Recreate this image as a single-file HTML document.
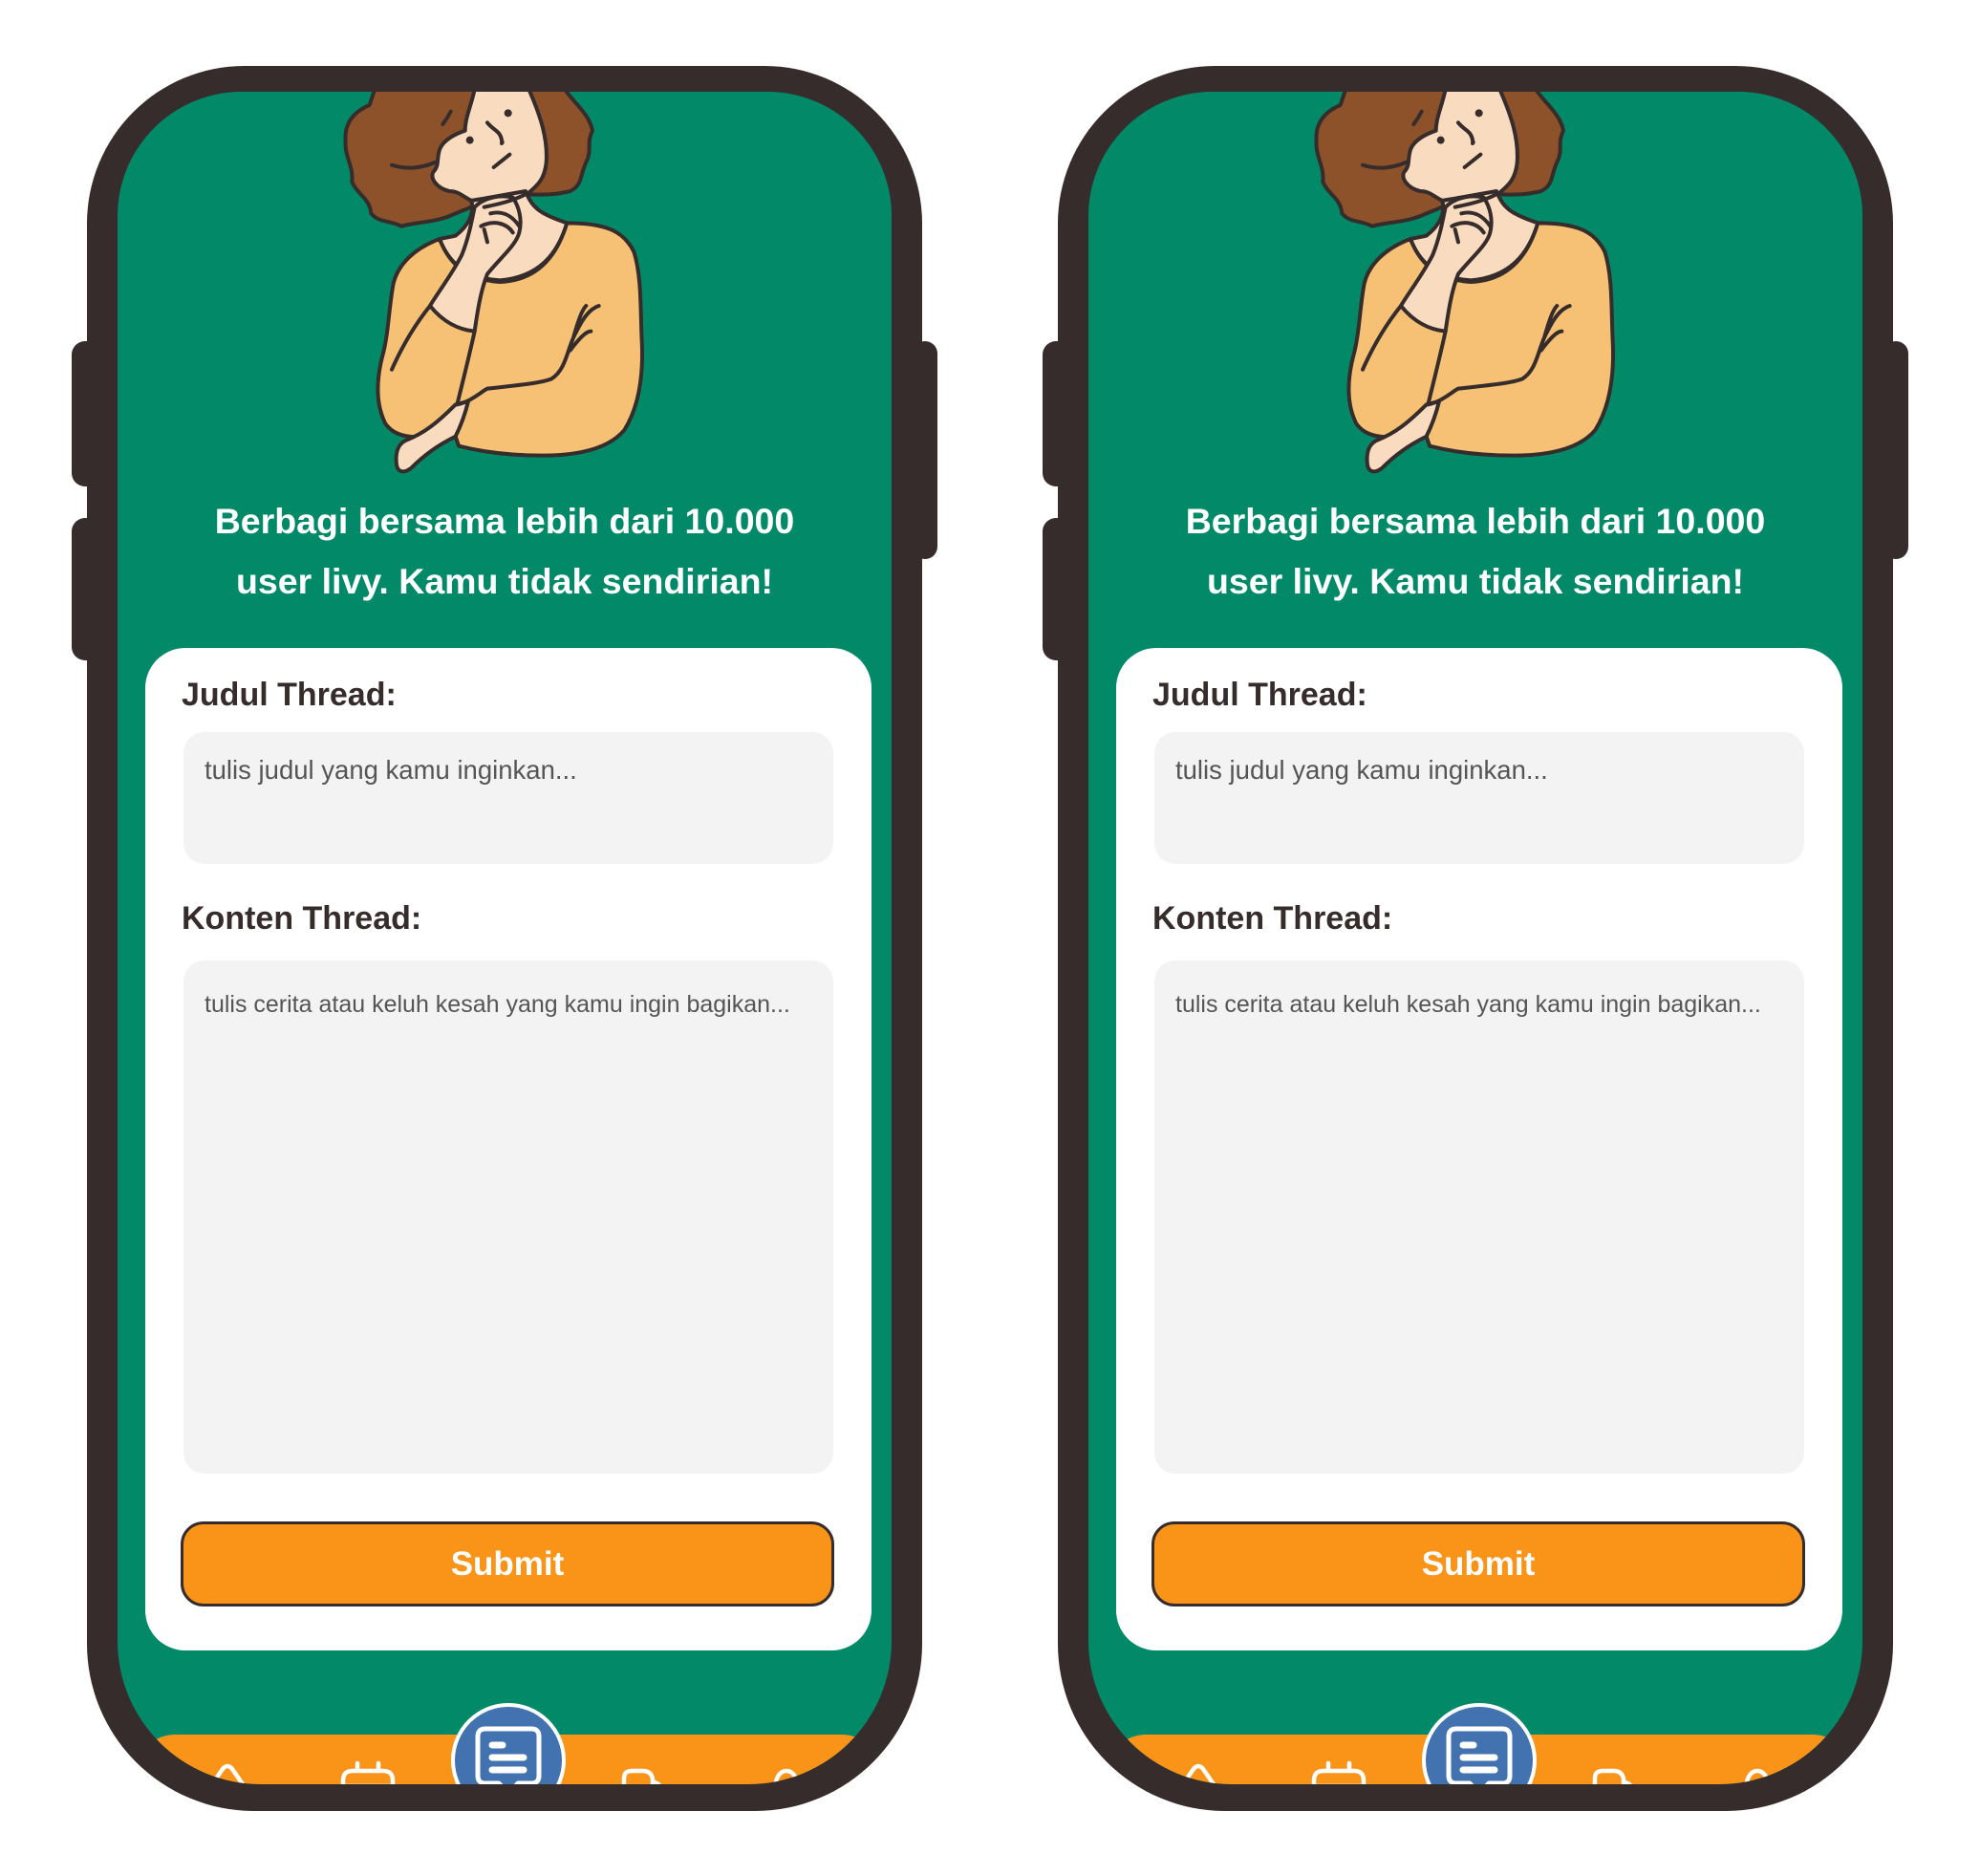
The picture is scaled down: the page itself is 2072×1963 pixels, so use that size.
<!DOCTYPE html>
<html><head><meta charset="utf-8"><style>
*{margin:0;padding:0;box-sizing:border-box}
body{width:2072px;height:1963px;background:#fff;position:relative;overflow:hidden;font-family:"Liberation Sans",sans-serif}
.phone{position:absolute;top:69px;width:874px;height:1826px;background:#352c2b;border-radius:165px 165px 175px 175px}
.btn{position:absolute;background:#352c2b;border-radius:14px}
.screen{position:absolute;left:32px;top:27px;width:810px;height:1771px;background:#028a68;border-radius:130px 130px 150px 150px;overflow:hidden}
.illus{position:absolute;left:227px;top:-6px;width:330px;height:410px}
.head{position:absolute;left:0;width:810px;top:418px;text-align:center;color:#fff;font-weight:bold;font-size:37.5px;line-height:63px}
.card{position:absolute;left:29px;top:582px;width:760px;height:1049px;background:#fff;border-radius:42px}
.lbl{position:absolute;left:38px;color:#352c2b;font-weight:bold;font-size:34px}
.inp{position:absolute;left:40px;width:680px;background:#f3f3f3;border-radius:22px;color:#555;padding-left:22px}
.sub{position:absolute;left:37px;top:914px;width:684px;height:89px;background:#f99419;border:3px solid #352c2b;border-radius:24px;color:#fff;font-weight:bold;font-size:35px;text-align:center;line-height:83px}
.bar{position:absolute;left:20px;top:1719px;width:778px;height:120px;background:#f99419;border-radius:40px 40px 0 0}
.fab{position:absolute;left:349px;top:1686px;width:120px;height:120px;border-radius:50%;background:#4273b0;border:4px solid #fff}
</style></head><body>

<div class="phone" style="left:91px"></div>
<div class="phone" style="left:1107px"></div>

<div class="btn" style="left:75px;top:357px;width:30px;height:152px"></div>
<div class="btn" style="left:75px;top:542px;width:30px;height:149px"></div>
<div class="btn" style="left:955px;top:357px;width:26px;height:228px"></div>
<div class="btn" style="left:1091px;top:357px;width:30px;height:152px"></div>
<div class="btn" style="left:1091px;top:542px;width:30px;height:149px"></div>
<div class="btn" style="left:1971px;top:357px;width:26px;height:228px"></div>

<div class="phone" style="left:91px;background:transparent">
<div class="screen">
 <svg class="illus" viewBox="0 0 990 1230" fill="none" stroke="#352c2b" stroke-width="12" stroke-linejoin="round" stroke-linecap="round">
  <path fill="#8e522a" d="M130 0 L110 60 C60 80 30 120 35 170 C30 220 60 250 55 300 C70 340 110 350 115 400 C140 430 170 420 210 440 C260 425 320 430 380 400 L430 380 L600 340 C640 340 680 345 740 330 C780 310 770 280 790 240 C810 200 790 180 810 140 C800 90 760 60 730 20 L720 0 Z"/>
  <path fill="#f9dbc0" d="M440 10 L610 10 C650 100 670 170 665 240 C660 290 640 310 610 335 L600 345 C560 350 470 350 430 360 C400 345 390 330 360 330 C320 320 300 290 310 270 C330 250 320 230 330 200 C340 170 380 150 410 140 C410 100 430 60 440 10 Z"/>
  <path fill="#f9dbc0" d="M600 330 C620 380 640 400 730 430 C700 530 640 600 520 610 C420 605 360 560 330 480 L380 470 C420 440 440 400 430 360 Z"/>
  <path fill="#f6c175" d="M330 480 C250 510 200 560 185 620 C170 700 170 780 150 850 C130 930 130 1000 160 1060 C190 1100 230 1110 380 1100 L390 1130 C470 1150 560 1160 650 1160 C760 1160 860 1140 910 1080 C960 1000 970 900 965 800 C960 700 965 600 940 520 C910 460 860 430 730 430 C700 530 640 610 520 615 C420 610 360 560 330 480 Z"/>
  <path fill="#f9dbc0" d="M300 690 C340 740 390 765 440 770 C450 700 460 640 480 590 C520 540 570 500 580 460 C590 420 580 380 560 350 C520 340 470 350 440 380 C430 430 420 480 400 530 C370 590 330 640 300 690 Z"/>
  <path d="M470 380 C520 370 560 360 600 340 M460 440 C500 420 540 430 560 460 M470 450 L480 490 M490 400 C530 390 560 410 580 440"/>
  <path fill="#f9dbc0" d="M230 1110 C200 1120 190 1150 195 1190 C200 1215 220 1215 240 1200 C280 1160 320 1130 380 1100 C400 1060 410 1030 420 990 L380 1000 C320 1060 280 1090 230 1110 Z"/>
  <path d="M180 890 C220 800 260 740 300 690 M440 770 C420 860 400 940 385 1000 C430 990 460 960 480 950 C560 940 640 935 680 920 C730 890 730 820 760 770 C780 730 800 700 830 690 M750 790 C770 720 780 700 790 690 M740 830 C770 790 790 770 805 770"/>
  <path d="M480 115 C500 140 520 140 525 170 C530 185 525 170 525 180 M500 255 L550 215 M180 248 C230 265 280 255 315 240 M340 120 C355 100 360 90 365 80"/>
  <circle cx="425" cy="170" r="12" fill="#352c2b" stroke="none"/><circle cx="545" cy="85" r="12" fill="#352c2b" stroke="none"/>
 </svg>
 <div class="head">Berbagi bersama lebih dari 10.000<br>user livy. Kamu tidak sendirian!</div>
 <div class="card">
  <div class="lbl" style="top:30px">Judul Thread:</div>
  <div class="inp" style="top:88px;height:138px;font-size:27.5px;padding-top:24px">tulis judul yang kamu inginkan...</div>
  <div class="lbl" style="top:264px">Konten Thread:</div>
  <div class="inp" style="top:327px;height:537px;font-size:25px;padding-top:32px">tulis cerita atau keluh kesah yang kamu ingin bagikan...</div>
  <div class="sub">Submit</div>
 </div>
 <div class="bar"></div>
 <svg style="position:absolute;left:0;top:1727px" width="810" height="60" fill="none" stroke="#fff" stroke-width="4.5" stroke-linecap="round" stroke-linejoin="round">
  <path d="M88 60 L110 28 Q115 22 120 28 L142 60"/>
  <path d="M236 60 L236 40 Q236 30 246 30 L278 30 Q288 30 288 40 L288 60 M238 46 L286 46 M251 30 L251 22 M273 30 L273 22"/>
  <path d="M530 60 L530 38 Q530 30 538 30 L550 30 Q558 30 560 38 L560 60 M560 42 Q568 42 570 52 L570 60"/>
  <ellipse cx="700" cy="44" rx="11" ry="14"/>
 </svg>
 <div class="fab">
  <svg width="112" height="112" viewBox="0 0 112 112" fill="none" stroke="#fff" stroke-width="5" stroke-linecap="round" stroke-linejoin="round" style="position:absolute;left:0;top:0">
   <path d="M24 31 Q24 23 32 23 L80 23 Q88 23 88 31 L88 72 Q88 80 80 80 L66 80 L56 91 L46 80 L32 80 Q24 80 24 72 Z"/>
   <path d="M39 40 L50 40 M39 53 L72 53 M39 66 L72 66" stroke-width="7"/>
  </svg>
 </div>
</div>
</div>

<div class="phone" style="left:1107px;background:transparent">
<div class="screen">
 <svg class="illus" viewBox="0 0 990 1230" fill="none" stroke="#352c2b" stroke-width="12" stroke-linejoin="round" stroke-linecap="round">
  <path fill="#8e522a" d="M130 0 L110 60 C60 80 30 120 35 170 C30 220 60 250 55 300 C70 340 110 350 115 400 C140 430 170 420 210 440 C260 425 320 430 380 400 L430 380 L600 340 C640 340 680 345 740 330 C780 310 770 280 790 240 C810 200 790 180 810 140 C800 90 760 60 730 20 L720 0 Z"/>
  <path fill="#f9dbc0" d="M440 10 L610 10 C650 100 670 170 665 240 C660 290 640 310 610 335 L600 345 C560 350 470 350 430 360 C400 345 390 330 360 330 C320 320 300 290 310 270 C330 250 320 230 330 200 C340 170 380 150 410 140 C410 100 430 60 440 10 Z"/>
  <path fill="#f9dbc0" d="M600 330 C620 380 640 400 730 430 C700 530 640 600 520 610 C420 605 360 560 330 480 L380 470 C420 440 440 400 430 360 Z"/>
  <path fill="#f6c175" d="M330 480 C250 510 200 560 185 620 C170 700 170 780 150 850 C130 930 130 1000 160 1060 C190 1100 230 1110 380 1100 L390 1130 C470 1150 560 1160 650 1160 C760 1160 860 1140 910 1080 C960 1000 970 900 965 800 C960 700 965 600 940 520 C910 460 860 430 730 430 C700 530 640 610 520 615 C420 610 360 560 330 480 Z"/>
  <path fill="#f9dbc0" d="M300 690 C340 740 390 765 440 770 C450 700 460 640 480 590 C520 540 570 500 580 460 C590 420 580 380 560 350 C520 340 470 350 440 380 C430 430 420 480 400 530 C370 590 330 640 300 690 Z"/>
  <path d="M470 380 C520 370 560 360 600 340 M460 440 C500 420 540 430 560 460 M470 450 L480 490 M490 400 C530 390 560 410 580 440"/>
  <path fill="#f9dbc0" d="M230 1110 C200 1120 190 1150 195 1190 C200 1215 220 1215 240 1200 C280 1160 320 1130 380 1100 C400 1060 410 1030 420 990 L380 1000 C320 1060 280 1090 230 1110 Z"/>
  <path d="M180 890 C220 800 260 740 300 690 M440 770 C420 860 400 940 385 1000 C430 990 460 960 480 950 C560 940 640 935 680 920 C730 890 730 820 760 770 C780 730 800 700 830 690 M750 790 C770 720 780 700 790 690 M740 830 C770 790 790 770 805 770"/>
  <path d="M480 115 C500 140 520 140 525 170 C530 185 525 170 525 180 M500 255 L550 215 M180 248 C230 265 280 255 315 240 M340 120 C355 100 360 90 365 80"/>
  <circle cx="425" cy="170" r="12" fill="#352c2b" stroke="none"/><circle cx="545" cy="85" r="12" fill="#352c2b" stroke="none"/>
 </svg>
 <div class="head">Berbagi bersama lebih dari 10.000<br>user livy. Kamu tidak sendirian!</div>
 <div class="card">
  <div class="lbl" style="top:30px">Judul Thread:</div>
  <div class="inp" style="top:88px;height:138px;font-size:27.5px;padding-top:24px">tulis judul yang kamu inginkan...</div>
  <div class="lbl" style="top:264px">Konten Thread:</div>
  <div class="inp" style="top:327px;height:537px;font-size:25px;padding-top:32px">tulis cerita atau keluh kesah yang kamu ingin bagikan...</div>
  <div class="sub">Submit</div>
 </div>
 <div class="bar"></div>
 <svg style="position:absolute;left:0;top:1727px" width="810" height="60" fill="none" stroke="#fff" stroke-width="4.5" stroke-linecap="round" stroke-linejoin="round">
  <path d="M88 60 L110 28 Q115 22 120 28 L142 60"/>
  <path d="M236 60 L236 40 Q236 30 246 30 L278 30 Q288 30 288 40 L288 60 M238 46 L286 46 M251 30 L251 22 M273 30 L273 22"/>
  <path d="M530 60 L530 38 Q530 30 538 30 L550 30 Q558 30 560 38 L560 60 M560 42 Q568 42 570 52 L570 60"/>
  <ellipse cx="700" cy="44" rx="11" ry="14"/>
 </svg>
 <div class="fab">
  <svg width="112" height="112" viewBox="0 0 112 112" fill="none" stroke="#fff" stroke-width="5" stroke-linecap="round" stroke-linejoin="round" style="position:absolute;left:0;top:0">
   <path d="M24 31 Q24 23 32 23 L80 23 Q88 23 88 31 L88 72 Q88 80 80 80 L66 80 L56 91 L46 80 L32 80 Q24 80 24 72 Z"/>
   <path d="M39 40 L50 40 M39 53 L72 53 M39 66 L72 66" stroke-width="7"/>
  </svg>
 </div>
</div>
</div>

</body></html>
